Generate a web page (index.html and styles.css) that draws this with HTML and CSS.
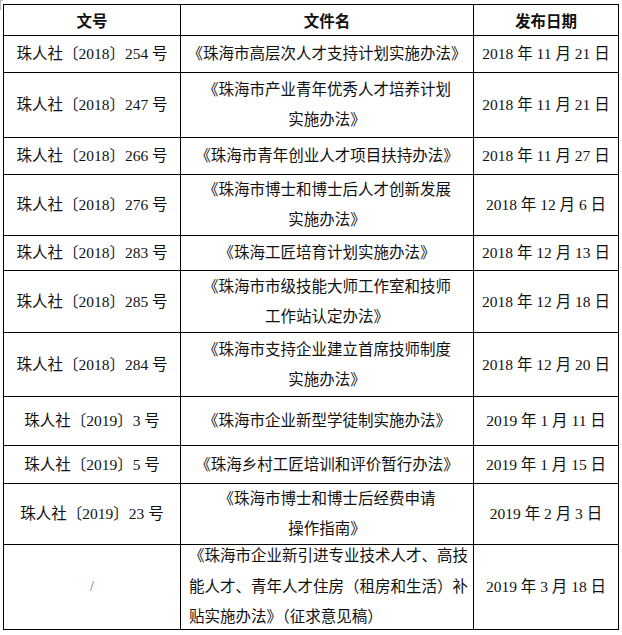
FILE: index.html
```html
<!DOCTYPE html>
<html lang="zh-CN">
<head>
<meta charset="utf-8">
<title>珠海市人才政策文件</title>
<link rel="stylesheet" href="styles.css">
</head>
<body>
<div class="wrap">
<table class="docs">
  <colgroup>
    <col class="c1"><col class="c2"><col class="c3">
  </colgroup>
  <thead>
    <tr class="h31"><th>文号</th><th>文件名</th><th>发布日期</th></tr>
  </thead>
  <tbody>
    <tr class="h37"><td>珠人社〔2018〕254 号</td><td>《珠海市高层次人才支持计划实施办法》</td><td>2018 年 11 月 21 日</td></tr>
    <tr class="h65"><td>珠人社〔2018〕247 号</td><td>《珠海市产业青年优秀人才培养计划<br>实施办法》</td><td>2018 年 11 月 21 日</td></tr>
    <tr class="h37"><td>珠人社〔2018〕266 号</td><td>《珠海市青年创业人才项目扶持办法》</td><td>2018 年 11 月 27 日</td></tr>
    <tr class="h61"><td>珠人社〔2018〕276 号</td><td>《珠海市博士和博士后人才创新发展<br>实施办法》</td><td>2018 年 12 月 6 日</td></tr>
    <tr class="h35"><td>珠人社〔2018〕283 号</td><td>《珠海工匠培育计划实施办法》</td><td>2018 年 12 月 13 日</td></tr>
    <tr class="h62"><td>珠人社〔2018〕285 号</td><td>《珠海市市级技能大师工作室和技师<br>工作站认定办法》</td><td>2018 年 12 月 18 日</td></tr>
    <tr class="h64"><td>珠人社〔2018〕284 号</td><td>《珠海市支持企业建立首席技师制度<br>实施办法》</td><td>2018 年 12 月 20 日</td></tr>
    <tr class="h49"><td>珠人社〔2019〕3 号</td><td>《珠海市企业新型学徒制实施办法》</td><td>2019 年 1 月 11 日</td></tr>
    <tr class="h38"><td>珠人社〔2019〕5 号</td><td>《珠海乡村工匠培训和评价暂行办法》</td><td>2019 年 1 月 15 日</td></tr>
    <tr class="h61"><td>珠人社〔2019〕23 号</td><td>《珠海市博士和博士后经费申请<br>操作指南》</td><td>2019 年 2 月 3 日</td></tr>
    <tr class="h85"><td class="slash">/</td><td class="left"><div class="tight">《珠海市企业新引进专业技术人才、高技<br>能人才、青年人才住房（租房和生活）补<br>贴实施办法》（征求意见稿）</div></td><td>2019 年 3 月 18 日</td></tr>
  </tbody>
</table>
</div>
</body>
</html>
```
FILE: styles.css
```css
html, body {
  margin: 0;
  padding: 0;
  background: #fff;
}

body {
  font-family: "Liberation Serif", "Noto Sans CJK SC", serif;
  font-size: 15.5px;
  color: #111;
}

.wrap {
  position: relative;
  padding: 4px 0 0 3px;
}

.wrap::before {
  content: "";
  position: absolute;
  left: 0;
  top: 0;
  width: 2px;
  height: 9px;
  border-left: 1px solid #bbb;
  border-top: 1px solid #bbb;
}

.docs {
  border-collapse: collapse;
  table-layout: fixed;
  width: 615px;
  position: relative;
}

.docs::after {
  content: "";
  position: absolute;
  right: -4px;
  bottom: -5px;
  width: 3px;
  height: 3px;
  border-left: 1px solid #bbb;
  border-top: 1px solid #bbb;
}

.c1 { width: 177px; }
.c2 { width: 293px; }
.c3 { width: 145px; }

.docs th,
.docs td {
  border: 1px solid #000;
  text-align: center;
  vertical-align: middle;
  padding: 0 4px;
  line-height: 30px;
  white-space: nowrap;
}

.docs th {
  font-family: "Noto Sans CJK SC", sans-serif;
  font-weight: bold;
  font-size: 15.5px;
  line-height: 20px;
}

.docs td.left {
  text-align: left;
  padding-left: 8px;
}

.tight {
  line-height: 30.5px;
  margin: -4px 0;
}

.docs td.slash {
  color: #666;
  font-size: 14px;
}

.h31 { height: 31px; }
.h35 { height: 35px; }
.h37 { height: 37px; }
.h38 { height: 38px; }
.h49 { height: 49px; }
.h61 { height: 61px; }
.h62 { height: 62px; }
.h64 { height: 64px; }
.h65 { height: 65px; }
.h85 { height: 85px; }
```
